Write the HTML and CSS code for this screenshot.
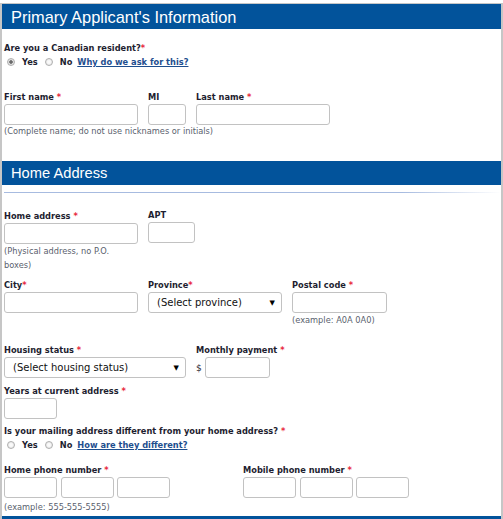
FILE: index.html
```html
<!DOCTYPE html>
<html lang="en">
<head>
    <meta charset="UTF-8">
    <meta name="viewport" content="width=device-width, initial-scale=1.0">
    <title>Applicant Information</title>
    <link rel="stylesheet" href="styles.css">
</head>
<body>

    <div class="app">
        <h2 class="section-head head-primary">Primary Applicant's Information</h2>

        <div class="label resident-label">Are you a Canadian resident?<span class="req">*</span></div>
        <div class="choices choices-resident">
            <input type="radio" name="resident" class="radio" checked>
            <span class="opt">Yes</span>
            <input type="radio" name="resident" class="radio">
            <span class="opt">No</span>
            <a href="#" class="help-link">Why do we ask for this?</a>
        </div>

        <div class="row row-name">
            <div class="field col-144">
                <div class="label">First name <span class="req">*</span></div>
                <input type="text" class="inp w-134">
            </div>
            <div class="field col-48">
                <div class="label">MI</div>
                <input type="text" class="inp w-38">
            </div>
            <div class="field">
                <div class="label">Last name <span class="req">*</span></div>
                <input type="text" class="inp w-134">
            </div>
        </div>
        <div class="hint hint-name">(Complete name; do not use nicknames or initials)</div>

        <h2 class="section-head head-address">Home Address</h2>
        <div class="rule"></div>

        <div class="row row-home">
            <div class="field col-144">
                <div class="label">Home address <span class="req">*</span></div>
                <input type="text" class="inp w-134">
                <div class="hint hint-wrap">(Physical address, no P.O. boxes)</div>
            </div>
            <div class="field field-apt">
                <div class="label">APT</div>
                <input type="text" class="inp w-47">
            </div>
        </div>

        <div class="row row-city">
            <div class="field col-144">
                <div class="label">City<span class="req">*</span></div>
                <input type="text" class="inp w-134">
            </div>
            <div class="field col-144">
                <div class="label">Province<span class="req">*</span></div>
                <div class="select w-134">
                    <span class="select-text">(Select province)</span>
                    <span class="arrow">&#9660;</span>
                </div>
            </div>
            <div class="field">
                <div class="label">Postal code <span class="req">*</span></div>
                <input type="text" class="inp w-95">
                <div class="hint">(example: A0A 0A0)</div>
            </div>
        </div>

        <div class="row row-housing">
            <div class="field col-192">
                <div class="label">Housing status <span class="req">*</span></div>
                <div class="select w-182">
                    <span class="select-text">(Select housing status)</span>
                    <span class="arrow">&#9660;</span>
                </div>
            </div>
            <div class="field">
                <div class="label">Monthly payment <span class="req">*</span></div>
                <div class="money">
                    <span class="dollar">$</span>
                    <input type="text" class="inp w-65">
                </div>
            </div>
        </div>

        <div class="field field-years">
            <div class="label">Years at current address <span class="req">*</span></div>
            <input type="text" class="inp w-53">
        </div>

        <div class="label mailing-label">Is your mailing address different from your home address? <span class="req">*</span></div>
        <div class="choices choices-mailing">
            <input type="radio" name="mailing" class="radio">
            <span class="opt">Yes</span>
            <input type="radio" name="mailing" class="radio">
            <span class="opt">No</span>
            <a href="#" class="help-link">How are they different?</a>
        </div>

        <div class="row row-phone">
            <div class="field col-239">
                <div class="label">Home phone number <span class="req">*</span></div>
                <div class="phone">
                    <input type="text" class="inp w-53">
                    <input type="text" class="inp w-53">
                    <input type="text" class="inp w-53">
                </div>
                <div class="hint hint-phone">(example: 555-555-5555)</div>
            </div>
            <div class="field">
                <div class="label">Mobile phone number <span class="req">*</span></div>
                <div class="phone">
                    <input type="text" class="inp w-53">
                    <input type="text" class="inp w-53">
                    <input type="text" class="inp w-53">
                </div>
            </div>
        </div>

        <div class="section-head head-next"></div>
    </div>

</body>
</html>
```
FILE: styles.css
```css
body {
    margin: 0;
    background-color: #fff;
    font-family: "DejaVu Sans", Verdana, sans-serif;
    color: #1e1e30;
}

.app {
    margin-top: 3px;
    border: 2px solid #c6c6c6;
    border-top-width: 1px;
    border-bottom: none;
    padding: 0 2px 0 2px;
    height: 520px;
    overflow: hidden;
}

.section-head {
    margin: 0 -2px;
    background-color: #02539b;
    color: #fff;
    font-family: "Liberation Sans", Arial, sans-serif;
    font-weight: normal;
    padding-left: 9px;
}

.head-primary {
    height: 25px;
    line-height: 27px;
    font-size: 16.4px;
}

.head-address {
    margin-top: 23px;
    height: 24px;
    line-height: 24px;
    font-size: 14.7px;
}

.head-next {
    margin-top: 2px;
    height: 10px;
}

.rule {
    margin-top: 7px;
    margin-right: -2px;
    height: 1px;
    background: linear-gradient(to right, #a7bbe0 80%, #fff);
}

.label {
    font-size: 8.25px;
    font-weight: bold;
    line-height: 12px;
    white-space: nowrap;
}

.req {
    color: #e8283c;
}

.hint {
    font-size: 8.25px;
    line-height: 14px;
    color: #5a5f6e;
}

.resident-label {
    margin-top: 13px;
}

.choices {
    display: flex;
    align-items: center;
    height: 14px;
    margin-top: 1px;
    font-size: 8.25px;
    font-weight: bold;
}

.radio {
    appearance: none;
    -webkit-appearance: none;
    width: 8px;
    height: 8px;
    margin: 0 7px 0 3px;
    border: 1px solid #b0b0b0;
    border-radius: 50%;
    background: radial-gradient(circle, #fafafa 30%, #dcdcdc);
    box-sizing: border-box;
}

.radio:checked {
    background: radial-gradient(circle, #6a6a6a 35%, #e0e0e0 45%);
}

.opt + .radio {
    margin-left: 7px;
}

.help-link {
    margin-left: 5px;
    color: #1e4e8e;
}

.row {
    display: flex;
    align-items: flex-start;
}

.field {
    display: flex;
    flex-direction: column;
    align-items: flex-start;
}

.col-144 { width: 144px; }
.col-48 { width: 48px; }
.col-192 { width: 192px; }
.col-239 { width: 239px; }

.inp {
    display: block;
    height: 21px;
    margin: 1px 0 0 0;
    padding: 0 4px;
    border: 1px solid #c2c2c2;
    border-radius: 3px;
    box-sizing: border-box;
    background: #fff;
    font-family: "DejaVu Sans", sans-serif;
    font-size: 10px;
}

.w-134 { width: 134px; }
.w-38 { width: 38px; }
.w-47 { width: 47px; }
.w-95 { width: 95px; }
.w-182 { width: 182px; }
.w-65 { width: 65px; }
.w-53 { width: 53px; }

.row-name {
    margin-top: 22px;
}

.hint-name {
    margin-top: -1px;
}

.row-home {
    margin-top: 17px;
}

.field-apt {
    margin-top: -1px;
}

.hint-wrap {
    width: 120px;
}

.row-city {
    margin-top: 7px;
}

.select {
    display: flex;
    align-items: center;
    justify-content: space-between;
    height: 21px;
    margin-top: 1px;
    padding: 0 6px 0 8px;
    border: 1px solid #c2c2c2;
    border-radius: 3px;
    box-sizing: border-box;
    font-size: 10px;
    color: #111;
}

.arrow {
    font-size: 7px;
    color: #000;
}

.row-housing {
    margin-top: 17px;
}

.money {
    display: flex;
    align-items: center;
}

.dollar {
    width: 9px;
    font-size: 9px;
    margin-top: 1px;
}

.field-years {
    margin-top: 7px;
}

.mailing-label {
    margin-top: 6px;
}

.row-phone {
    margin-top: 12px;
}

.phone {
    display: flex;
    gap: 3.5px;
}

.hint-phone {
    margin-top: 2px;
}
```
